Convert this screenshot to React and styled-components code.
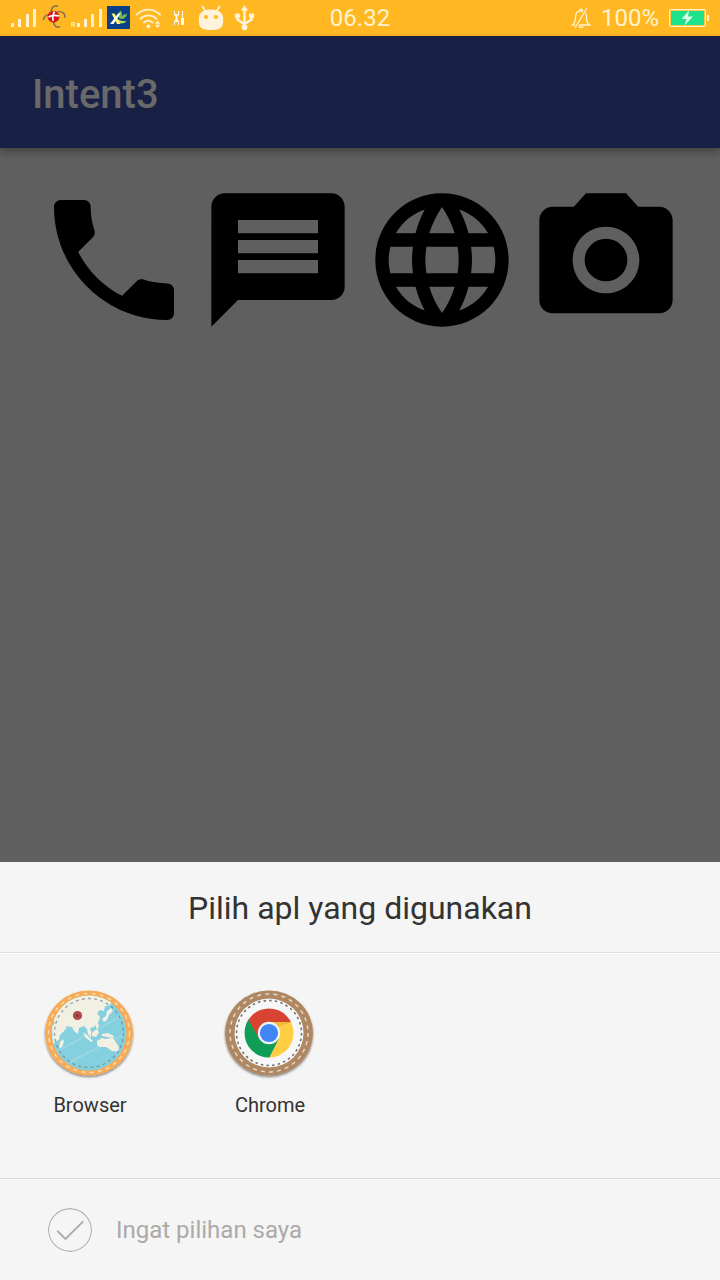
import React from "react";
import styled, { createGlobalStyle } from "styled-components";

const GlobalStyle = createGlobalStyle`
  *, *::before, *::after { box-sizing: border-box; }
  body { margin: 0; background: #5f5f5f; font-family: Roboto, "Liberation Sans", sans-serif; }
  button { font: inherit; border: 0; padding: 0; background: none; cursor: pointer; }
`;

const Screen = styled.div`
  display: flex;
  flex-direction: column;
  min-height: 100vh;
`;

const StatusBar = styled.div`
  display: grid;
  grid-template-columns: 1fr auto 1fr;
  align-items: center;
  height: 36px;
  padding: 0 11px;
  background: #ffb822;
  color: #fff3cf;
  font-size: 24px;
  line-height: 36px;
`;

const StatusGroup = styled.div`
  display: flex;
  align-items: center;
  justify-content: ${(p) => (p.$end ? "flex-end" : "flex-start")};
  gap: ${(p) => (p.$end ? 10 : 5)}px;
`;

const StatusSvg = styled.svg`
  display: block;
  flex: none;
  height: 36px;
  width: ${(p) => p.$width}px;
`;

const AppBar = styled.header`
  display: flex;
  align-items: center;
  height: 112px;
  padding: 6px 32px 0;
  background: #192046;
  box-shadow: 0 4px 8px rgba(0, 0, 0, 0.3);
`;

const AppTitle = styled.h1`
  margin: 0;
  color: #696969;
  font-size: 40px;
  line-height: 48px;
  font-weight: 500;
`;

const Content = styled.main`
  flex: 1;
  padding: 32px 0;
`;

const IntentRow = styled.div`
  display: flex;
  justify-content: center;
  gap: 4px;
`;

const IntentButton = styled.button`
  width: 160px;
  height: 160px;
  color: #000;

  svg { display: block; width: 100%; height: 100%; fill: currentColor; }
`;

const Sheet = styled.section`
  background: #f5f5f5;
`;

const SheetTitle = styled.h2`
  margin: 0;
  padding: 26px 24px 24px;
  border-bottom: 1px solid #dedede;
  box-shadow: 0 1px 0 #fff;
  color: #333;
  font-size: 32px;
  line-height: 40px;
  font-weight: 400;
  text-align: center;
`;

const AppGrid = styled.div`
  display: grid;
  grid-template-columns: repeat(4, 1fr);
  min-height: 225px;
  padding-top: 32px;
`;

const AppButton = styled.button`
  display: flex;
  flex-direction: column;
  align-items: center;
  align-self: start;
  gap: 8px;
  color: #333;
  font-size: 20px;
  line-height: 24px;

  svg { display: block; width: 100px; height: 100px; }
`;

const RememberLabel = styled.label`
  display: flex;
  align-items: center;
  gap: 24px;
  height: 102px;
  padding: 0 48px;
  border-top: 1px solid #d9d9d9;
  color: #aaa;
  font-size: 24px;
  line-height: 32px;
  cursor: pointer;
`;

const RoundCheck = styled.input`
  appearance: none;
  flex: none;
  width: 44px;
  height: 44px;
  margin: 0;
  border-radius: 50%;
  background: center / 44px 44px no-repeat
    url("data:image/svg+xml,%3Csvg xmlns='http://www.w3.org/2000/svg' viewBox='0 0 44 44' fill='none' stroke='%23aaaaaa'%3E%3Ccircle cx='22' cy='22' r='21.4' stroke-width='1.1'/%3E%3Cpath d='M9.8 23.3l7.7 7.7L34.7 13.8' stroke-width='1.9' stroke-linecap='round'/%3E%3C/svg%3E");
  cursor: pointer;
`;

function SignalIcon() {
  return (
    <StatusSvg $width={25} viewBox="11 0 25 36" fill="#fff3cf" role="img" aria-label="Signal">
      <path d="M11 23h3v4h-3zM18 19h3v8h-3zM26 14h3v13h-3zM33 9h3v18h-3z" />
    </StatusSvg>
  );
}

function RoamingSignalIcon() {
  return (
    <StatusSvg $width={31} viewBox="71 0 31 36" fill="#fff3cf" role="img" aria-label="Roaming signal">
      <text x="71" y="27" fontSize="7" fontWeight="500" fontFamily="Roboto, sans-serif">R</text>
      <path d="M77 23h3v4h-3zM84 19h3v8h-3zM91 14h3v13h-3zM99 9h3v18h-3z" />
    </StatusSvg>
  );
}

function FirstCarrierIcon() {
  return (
    <StatusSvg $width={25} viewBox="41 0 25 36" aria-hidden="true">
      <g fill="none" stroke="#85765a" strokeWidth="1.700" strokeLinecap="round">
        <path d="M57.500 6c-5-.5-6.500 2.500-6.500 7" />
        <path d="M65 17c0-3.500-2.500-5.500-7-5.500" />
        <path d="M59.500 27c-4.500.5-6-2.500-6-6" />
        <path d="M43.500 19.500c.5-3 3-5 7-5.500" />
      </g>
      <circle cx="53.500" cy="16.700" r="5.900" fill="#d4141c" />
      <path d="M54.500 11.500c-1.500 2.500-2 6-1.500 9.500M48.500 17c3-1.800 7-2 10.500-1" stroke="#fff" strokeWidth="1.600" fill="none" />
    </StatusSvg>
  );
}

function SecondCarrierIcon() {
  return (
    <StatusSvg $width={23} viewBox="107 0 23 36" aria-hidden="true">
      <path d="M107 6h23v23h-23z" fill="#0b3f87" />
      <path d="M118.500 17.500c-1-3 0-5 2-7 1.700 2 2 4 1 6 1.500-1.700 3-2.500 5.500-2.500-.5 3-2.500 5-6 5z" fill="#6fbf4a" />
      <path d="M117 18.500c3 2.500 6 3 9.500 2.500-1.500 2.500-5 3-8 1.500z" fill="#b9dc5a" />
      <path d="M111.500 13.500h3l6 10.500h-3.500z" fill="#fff36b" />
      <path d="M118 13.500h2.500L113.500 24h-3.500z" fill="#fff" />
    </StatusSvg>
  );
}

function WifiIcon() {
  return (
    <StatusSvg $width={27} viewBox="135 0 27 36" fill="none" stroke="#fff3cf" role="img" aria-label="Wi-Fi">
      <path d="M136.800 14.500c7-6.500 16.500-6.500 23.200 0M140.300 18.700c5-4.500 11.300-4.500 16.300 0M144 22.600c2.800-2.500 6-2.500 8.700 0" strokeWidth="1.900" strokeLinecap="round" />
      <circle cx="148.400" cy="26.300" r="1.900" fill="#fff3cf" stroke="none" />
      <path d="M157.500 20.500l2.700 3.200h-5.400zM157.500 28l2.700-3.200h-5.400z" fill="#fff3cf" stroke="none" />
    </StatusSvg>
  );
}

function ToolsIcon() {
  return (
    <StatusSvg $width={24} viewBox="167 0 24 36" fill="#fffaf0" aria-hidden="true">
      <path d="M174 11h1v3h3v-3h1v4l-1.500 1v4l1.500 1v4h-1v-3h-3v3h-1v-4l1.500-1v-4l-1.500-1z" />
      <path d="M182 11h1v7h1v7h-3v-7h1z" />
    </StatusSvg>
  );
}

function RobotIcon() {
  return (
    <StatusSvg $width={30} viewBox="196 0 30 36" aria-hidden="true">
      <path d="M202.500 6.500l3 5M219.500 6.500l-3 5" stroke="#fff3dc" strokeWidth="1.800" strokeLinecap="round" />
      <path d="M199 17c.5-5 5.500-7.500 12-7.500s11.500 2.500 12 7.500c.5 6 0 9-2.500 11-2.500 1.500-5.500 2-9.500 2s-7-.5-9.500-2c-2.500-2-3-5-2.500-11z" fill="#fff3dc" />
      <circle cx="206" cy="17" r="2" fill="#ffb822" />
      <circle cx="216" cy="17" r="2" fill="#ffb822" />
    </StatusSvg>
  );
}

function UsbIcon() {
  return (
    <StatusSvg $width={24} viewBox="231 0 24 36" fill="#fff3dc" role="img" aria-label="USB">
      <path d="M244.500 9v18M237.500 16v3.500l7 5M251.500 16v3.500l-7 4.500" fill="none" stroke="#fff3dc" strokeWidth="2.400" />
      <path d="M244.500 5l3.500 5.500h-7zM249 13.500h5v4.500h-5z" />
      <circle cx="237.500" cy="16" r="2.700" />
      <circle cx="244.500" cy="27.300" r="2.900" />
    </StatusSvg>
  );
}

function MutedBellIcon() {
  return (
    <StatusSvg $width={20} viewBox="571 0 20 36" fill="none" stroke="#fff3cf" strokeWidth="1.300" role="img" aria-label="Muted">
      <path d="M572.500 25c2.500-2 3-3.500 3-8 0-4 2-6 5.500-6s5.500 2 5.500 6c0 4.500.5 6 3.500 8zM579.500 11c0-2.500 3-2.500 3 0M579 26.500c1 1.300 3 1.300 4 0" />
      <path d="M587 8l-12 20" stroke="#ffb822" strokeWidth="3.400" />
      <path d="M587 8l-12 20" />
    </StatusSvg>
  );
}

function BatteryIcon() {
  return (
    <StatusSvg $width={40} viewBox="669 0 40 36" role="img" aria-label="Charging">
      <rect x="669.600" y="9.600" width="35.800" height="16.800" rx="1.500" fill="#ffb822" stroke="#fff3cf" strokeWidth="1.200" />
      <path d="M671 11h33v14h-33z" fill="#1de28b" />
      <path d="M689 10.500l-7.500 8.500h5l-2 6.500 8.500-9h-5z" fill="#dcffe9" />
      <path d="M707 15h2v6h-2z" fill="#fff3cf" />
    </StatusSvg>
  );
}

function BrowserIcon() {
  return (
    <svg viewBox="-50 -50 100 100" aria-hidden="true">
      <defs>
        <filter id="mapShadow" x="-20%" y="-20%" width="140%" height="140%">
          <feDropShadow dx="0" dy="1.500" stdDeviation="1.300" floodOpacity="0.5" />
        </filter>
        <clipPath id="mapClip"><circle r="37.500" /></clipPath>
      </defs>
      <g transform="translate(-1 -2)">
        <ellipse rx="44" ry="42.500" fill="#f7ab57" filter="url(#mapShadow)" />
        <circle r="37.500" fill="#85d0de" />
        <g clipPath="url(#mapClip)" fill="#f2f0e2">
          <path d="M-40-12l4-1 2 3-3 4 1 17 3-3 3-1 1-5 4-4 3-5 5 1 2 4 4 3 1-6 5-2 3 3 1 5 3 4 0-7-1-3 4-1 4-4 2-6-3-4 3-3 4 1 1-5 5-1 2-5 5 1-3-6-13-9-24-6-20 6-16 21z" />
          <path d="M-29 9l3-3 1 3-2 5-3 1zM-6-1l5 4 5 5-2 1-6-5zM3 0l5-4 2 3-3 5-4-1zM7-10l3 1-1 5-2-1zM13 1l6-1 6 3-1 2-6-1-5-1zM13-14l4-3 1-5 4-3 2 3-4 4-2 5-3 2z" />
          <path d="M8 8l5-3 4 1 4-1 3 0 2 3 4 6-1 5-6-1-6-4-6 0-3-2z" />
        </g>
        <g clipPath="url(#mapClip)" stroke="#fff" strokeWidth="2" opacity=".15">
          <path d="M-40-15L0-42M-38 5L30-35M-35 20L38-20M-25 32L38 0" />
        </g>
        <ellipse rx="40.500" ry="39.500" fill="none" stroke="#fde5bc" strokeWidth="1.400" strokeDasharray="4 4.300" opacity=".85" />
        <circle r="34.500" fill="none" stroke="#6d7d84" strokeWidth="1.300" strokeDasharray="3 3.200" opacity=".7" />
        <circle cx="-11.500" cy="-17.500" r="4.600" fill="#b24b4c" />
        <circle cx="-11.500" cy="-17.500" r="1.600" fill="#86383b" />
      </g>
    </svg>
  );
}

function ChromeIcon() {
  return (
    <svg viewBox="-50 -50 100 100" aria-hidden="true">
      <defs>
        <filter id="chromeShadow" x="-20%" y="-20%" width="140%" height="140%">
          <feDropShadow dx="0" dy="1.500" stdDeviation="1.300" floodOpacity="0.5" />
        </filter>
        <clipPath id="chromeClip"><circle r="24.500" /></clipPath>
      </defs>
      <g transform="translate(-1 -2)">
        <ellipse rx="44" ry="42.500" fill="#b08763" filter="url(#chromeShadow)" />
        <circle r="34.500" fill="#f7f7f7" />
        <circle r="39" fill="none" stroke="#e7dbc9" strokeWidth="1.400" strokeDasharray="4 4.170" />
        <circle r="32.500" fill="none" stroke="#77736f" strokeWidth="1.600" strokeDasharray="2.500 3.170" />
        <g clipPath="url(#chromeClip)">
          <path d="M-30-30H30V-11H0l-10 17-13-22z" fill="#d84332" />
          <path d="M-30-30l20 35.500L10 6-2 30h-28z" fill="#109d58" />
          <path d="M0-11h30v42H-3L10 6z" fill="#ffce43" />
          <path d="M0-11h24L8-6z" fill="#d59a24" opacity=".35" />
        </g>
        <circle r="11.200" fill="#f1f3f5" />
        <circle r="9.100" fill="#4285f4" />
      </g>
    </svg>
  );
}

const intents = [
  {
    label: "Call",
    path: "M6.62 10.79c1.44 2.83 3.76 5.14 6.59 6.59l2.2-2.2c.27-.27.67-.36 1.02-.24 1.12.37 2.33.57 3.57.57.55 0 1 .45 1 1V20c0 .55-.45 1-1 1-9.39 0-17-7.61-17-17 0-.55.45-1 1-1h3.5c.55 0 1 .45 1 1 0 1.25.2 2.45.57 3.57.11.35.03.74-.25 1.02l-2.2 2.2z",
  },
  {
    label: "Message",
    path: "M20 2H4c-1.1 0-1.99.9-1.99 2L2 22l4-4h14c1.1 0 2-.9 2-2V4c0-1.1-.9-2-2-2zm-2 12H6v-2h12v2zm0-3H6V9h12v2zm0-3H6V6h12v2z",
  },
  {
    label: "Web",
    path: "M11.99 2C6.47 2 2 6.48 2 12s4.47 10 9.99 10C17.52 22 22 17.52 22 12S17.52 2 11.99 2zm6.93 6h-2.95c-.32-1.25-.78-2.45-1.38-3.56 1.84.63 3.37 1.91 4.33 3.56zM12 4.04c.83 1.2 1.48 2.53 1.91 3.96h-3.82c.43-1.43 1.08-2.76 1.91-3.96zM4.26 14C4.1 13.36 4 12.69 4 12s.1-1.36.26-2h3.38c-.08.66-.14 1.32-.14 2 0 .68.06 1.34.14 2H4.26zm.82 2h2.95c.32 1.25.78 2.45 1.38 3.56-1.84-.63-3.37-1.9-4.33-3.56zm2.95-8H5.08c.96-1.66 2.49-2.93 4.33-3.56C8.81 5.55 8.35 6.75 8.03 8zM12 19.96c-.83-1.2-1.48-2.53-1.91-3.96h3.82c-.43 1.43-1.08 2.76-1.91 3.96zM14.34 14H9.66c-.09-.66-.16-1.32-.16-2 0-.68.07-1.35.16-2h4.68c.09.65.16 1.32.16 2 0 .68-.07 1.34-.16 2zm.25 5.56c.6-1.11 1.06-2.31 1.38-3.56h2.95c-.96 1.65-2.49 2.93-4.33 3.56zM16.36 14c.08-.66.14-1.32.14-2 0-.68-.06-1.34-.14-2h3.38c.16.64.26 1.31.26 2s-.1 1.36-.26 2h-3.38z",
  },
  {
    label: "Camera",
    path: "M12 8.8a3.2 3.2 0 1 0 0 6.400 3.200 3.200 0 1 0 0-6.400zM9 2L7.170 4H4c-1.100 0-2 .9-2 2v12c0 1.100.9 2 2 2h16c1.100 0 2-.9 2-2V6c0-1.100-.9-2-2-2h-3.170L15 2H9zm3 15c-2.760 0-5-2.240-5-5s2.240-5 5-5 5 2.240 5 5-2.240 5-5 5z",
  },
];

export default function App() {
  return (
    <Screen>
      <GlobalStyle />
      <StatusBar>
        <StatusGroup>
          <SignalIcon />
          <FirstCarrierIcon />
          <RoamingSignalIcon />
          <SecondCarrierIcon />
          <WifiIcon />
          <ToolsIcon />
          <RobotIcon />
          <UsbIcon />
        </StatusGroup>
        <span>06.32</span>
        <StatusGroup $end>
          <MutedBellIcon />
          <span>100%</span>
          <BatteryIcon />
        </StatusGroup>
      </StatusBar>
      <AppBar>
        <AppTitle>Intent3</AppTitle>
      </AppBar>
      <Content>
        <IntentRow>
          {intents.map(({ label, path }) => (
            <IntentButton key={label} type="button" aria-label={label}>
              <svg viewBox="0 0 24 24" aria-hidden="true"><path d={path} /></svg>
            </IntentButton>
          ))}
        </IntentRow>
      </Content>
      <Sheet aria-labelledby="sheet-title">
        <SheetTitle id="sheet-title">Pilih apl yang digunakan</SheetTitle>
        <AppGrid>
          <AppButton type="button"><BrowserIcon />Browser</AppButton>
          <AppButton type="button"><ChromeIcon />Chrome</AppButton>
        </AppGrid>
        <RememberLabel htmlFor="remember">
          <RoundCheck id="remember" type="checkbox" />
          Ingat pilihan saya
        </RememberLabel>
      </Sheet>
    </Screen>
  );
}
